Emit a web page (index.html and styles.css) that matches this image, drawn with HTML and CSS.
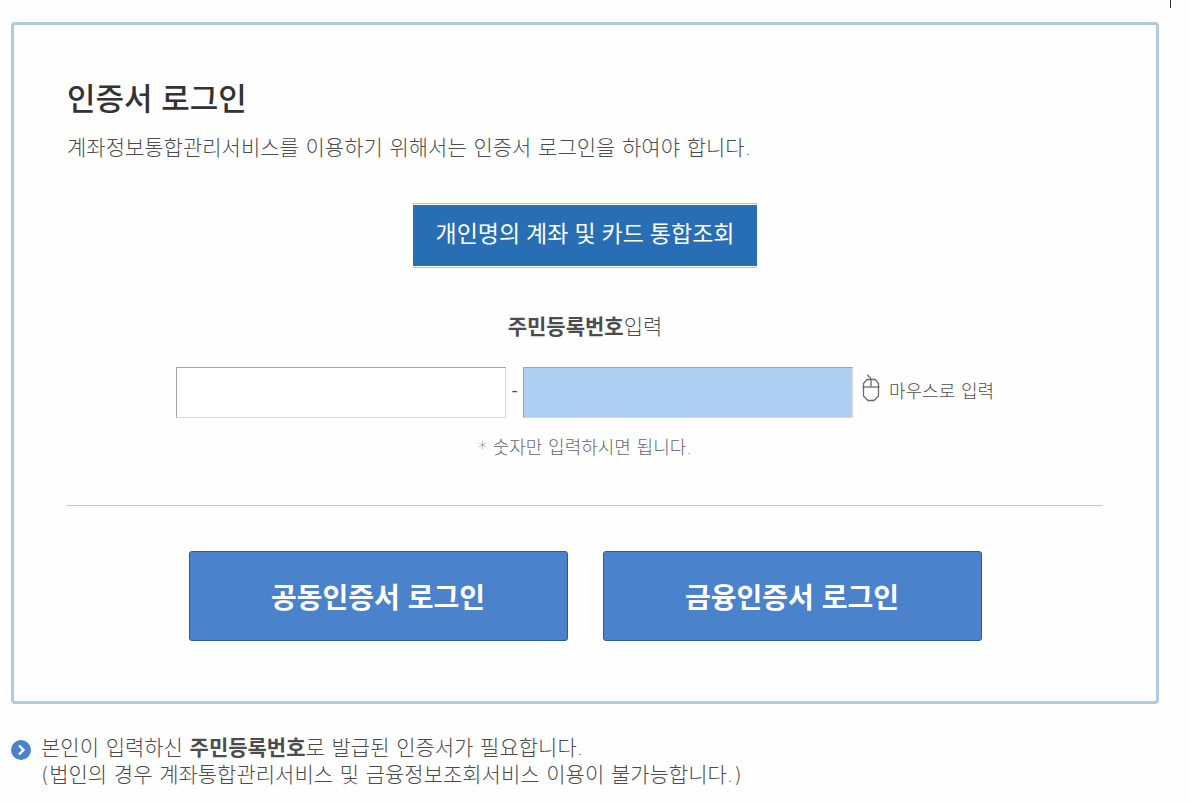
FILE: index.html
```html
<!DOCTYPE html>
<html lang="ko">
<head>
<meta charset="utf-8">
<meta name="viewport" content="width=device-width, initial-scale=1">
<title>인증서 로그인</title>
<link rel="stylesheet" href="styles.css">
</head>
<body>
<div class="page">
  <div class="topbar"><span class="topbar-divider"></span></div>
  <main class="panel">
    <h1 class="title">인증서 로그인</h1>
    <p class="desc">계좌정보통합관리서비스를 이용하기 위해서는 인증서 로그인을 하여야 합니다.</p>
    <div class="tab-wrap"><button type="button" class="tab">개인명의 계좌 및 카드 통합조회</button></div>
    <form class="form">
      <label class="form-label" for="rrn-front"><strong>주민등록번호</strong>입력</label>
      <div class="fields">
        <input class="field" id="rrn-front" type="text" inputmode="numeric" maxlength="6">
        <span class="dash">-</span>
        <input class="field field-secure" type="password" inputmode="numeric" maxlength="7" aria-label="주민등록번호 뒷자리">
        <button type="button" class="mouse-btn">
          <svg class="mouse-icon" width="20" height="28" viewBox="0 0 20 28" fill="none" stroke="#6a6a6a" stroke-width="1.3" aria-hidden="true">
            <path d="M6.500 .5c0 2.500 3.500 2 3.500 5v7"/>
            <path d="M6 5.500h8l3.500 4V22L13 26.500H7L2.500 22V9.500z"/>
            <path d="M1.500 13h17"/>
          </svg>
          <span>마우스로 입력</span>
        </button>
      </div>
      <p class="hint">* 숫자만 입력하시면 됩니다.</p>
    </form>
    <div class="actions">
      <button type="button" class="login-btn">공동인증서 로그인</button>
      <button type="button" class="login-btn">금융인증서 로그인</button>
    </div>
  </main>
  <div class="notice">
    <svg class="notice-icon" width="20" height="20" viewBox="0 0 20 20" aria-hidden="true">
      <circle cx="10" cy="10" r="10" fill="#4a82cc"/>
      <path d="M8 5.500 12.500 10 8 14.500" fill="none" stroke="#fff" stroke-width="2.400"/>
    </svg>
    <p class="notice-text">본인이 입력하신 <strong>주민등록번호</strong>로 발급된 인증서가 필요합니다.<br>(법인의 경우 계좌통합관리서비스 및 금융정보조회서비스 이용이 불가능합니다.)</p>
  </div>
</div>
</body>
</html>
```
FILE: styles.css
```css
* { box-sizing: border-box; }
body {
  margin: 0;
  background: #fefefe;
  color: #4c4c4c;
  font-family: "DejaVu Sans", "Noto Sans CJK KR", sans-serif;
  font-size: 21px;
  font-weight: 200;
  line-height: 27px;
}
button, input { font: inherit; }
button { cursor: pointer; }
strong { font-weight: 700; }
.page { padding: 0 31px 14px 11px; }
.topbar { display: flex; justify-content: flex-end; height: 22px; margin-right: -12px; }
.topbar-divider { width: 1px; height: 8px; background: #333; }
.panel {
  padding: 50px 53px 60px;
  border: 3px solid #afcbe0;
  border-radius: 4px;
}
.title { margin: 0; color: #333; font-family: "Noto Sans CJK KR", sans-serif; font-size: 31px; font-weight: 500; line-height: 44px; }
.desc { margin: 16px 0 0; }
.tab-wrap { display: flex; justify-content: center; margin-top: 41px; }
.tab {
  height: 65px;
  padding: 0 23px 5px;
  border: solid #b5c0cc;
  border-width: 1px 0;
  background: #286eb4;
  box-shadow: inset 0 1px #fff, inset 0 -1px #fff;
  color: #fff;
  font-family: "Open Sans", "Noto Sans CJK KR", sans-serif;
  font-size: 23px;
  font-weight: 400;
}
.form { display: flex; flex-direction: column; align-items: center; }
.form-label { margin-top: 46px; }
.fields { display: flex; align-items: center; align-self: stretch; justify-content: center; margin-top: 26px; }
.field {
  flex: 0 1 330px;
  min-width: 0;
  height: 51px;
  padding: 0 12px;
  border: 1px solid;
  border-color: #a3a3a3 #d8d8d8 #d8d8d8 #a3a3a3;
  background: #fff;
}
.field-secure { background: #aed0f2; }
.dash { width: 17px; padding-bottom: 4px; font-family: "Open Sans", sans-serif; font-size: 19px; font-weight: 400; text-align: center; }
.mouse-btn {
  display: flex;
  align-items: center;
  gap: 8px;
  padding: 0 0 2px 8px;
  border: 0;
  background: none;
  color: #4c4c4c;
  font-size: 18px;
  white-space: nowrap;
}
.mouse-icon { margin-bottom: 8px; }
.hint { margin: 16px 0 0; color: #666; font-size: 18px; }
.actions {
  display: flex;
  justify-content: center;
  gap: 35px;
  margin-top: 44px;
  padding-top: 45px;
  border-top: 1px solid #c4c4c4;
}
.login-btn {
  flex: 0 1 379px;
  height: 90px;
  border: 1px solid #285d94;
  border-radius: 3px;
  background: #4a82cc;
  color: #fff;
  font-family: "Noto Sans CJK KR", sans-serif;
  font-size: 28px;
  font-weight: 700;
}
.notice { display: flex; gap: 10px; margin-top: 31px; }
.notice-icon { flex: none; margin-top: 5px; }
.notice-text { margin: 0; }
```
